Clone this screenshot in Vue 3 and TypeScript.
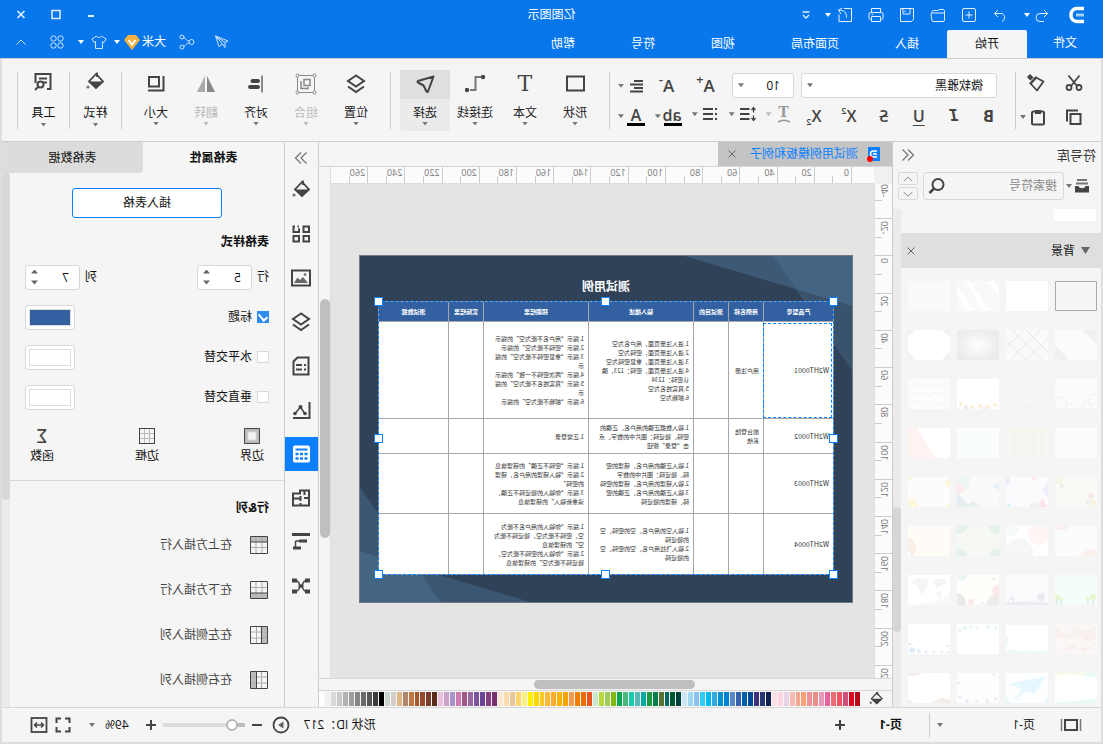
<script setup lang="ts">
import { ref } from 'vue'

interface Tool { label: string; icon: string; off?: boolean; on?: boolean; glyph?: string }
interface Row { code: string; name: string; input: string; expect: string }

const icons: Record<string, string> = {
  undo: '<path d="M8 5 4.500 8.500 8 12M4.500 8.500H12a4 4 0 0 1 0 8H8"/>',
  redo: '<path d="M12 5l3.500 3.500L12 12M15.500 8.500H9c-4 0-5 6-1 8"/>',
  plus: '<rect x="3.500" y="3.500" width="13" height="13" rx="1.500"/><path d="M10 6.500v7M6.500 10h7"/>',
  folder: '<path d="M3.500 7.500v7.500a1.500 1.500 0 0 0 1.500 1.500h10a1 1 0 0 0 1-1l1-6.500a1 1 0 0 0-1-1H4.500a1 1 0 0 1-1-1V5.500a2 2 0 0 1 1-1h4l2 1h4a1.500 1.500 0 0 1 1.500 2"/>',
  save: '<path d="M3.500 3.500h13v13h-11l-2-2zM7 4v5h7V4M12 5.500v1.500"/>',
  print: '<path d="M5.500 7.500v-4h9v4M5.500 14.500h-1a1.500 1.500 0 0 1-1.500-1.500V9a1.500 1.500 0 0 1 1.500-1.500h11A1.500 1.500 0 0 1 17 9v4a1.500 1.500 0 0 1-1.500 1.500h-1M5.500 11.500h9v5h-9zM13 9.500h1.500"/>',
  export: '<path d="M11 3.500H3.500v13h12.500v-7M8.500 12.500c0-5 2-7 7.500-7.500M12.500 3l4 2-2.500 4"/>',
  more: '<path d="M6.500 7h7M7 10l3 3 3-3" stroke-width="1.300"/>',
  min: '<path d="M7 11h6" stroke-width="2"/>',
  max: '<rect x="6" y="5.500" width="8" height="8" stroke-width="1.500"/>',
  close: '<path d="M6.500 6l7 7M13.500 6l-7 7" stroke-width="1.600"/>',
  cross: '<path d="M6.500 6.500l7 7M13.500 6.500l-7 7"/>',
  send: '<path d="M16.500 4 4 9l3 1.500v5l2.500-3.500 3.500 2.500zM7 10.500 16.500 4 9.500 12"/>',
  share: '<circle cx="5.500" cy="10" r="2.500"/><circle cx="15" cy="5" r="2"/><circle cx="15" cy="15" r="2"/><path d="M8 9c3 0 3-3 5.500-3.500M8 11c3 0 3 3 5.500 3.500"/>',
  shirt: '<path d="M7.500 4 3 7l2 3.500 1.500-1v7h7v-7l1.500 1L17 7l-4.500-3c-1 2-4 2-5 0z"/>',
  apps: '<circle cx="6.500" cy="6.500" r="2.700"/><circle cx="13.500" cy="6.500" r="2.700"/><circle cx="6.500" cy="13.500" r="2.700"/><circle cx="13.500" cy="13.500" r="2.700"/>',
  up: '<path d="M5.500 12.500 10 8l4.500 4.500"/>',
  down: '<path d="M5.500 8 10 12.500 14.500 8"/>',
  cut: '<path d="M4.500 2.500 13 13M15.500 2.500 7 13" stroke-width="1.800"/><circle cx="5" cy="14.500" r="2.500" stroke-width="1.800"/><circle cx="15" cy="14.500" r="2.500" stroke-width="1.800"/>',
  copy: '<path d="M3.500 7h10v10h-10z" stroke-width="2"/><path d="M6 3.500h11v11" stroke-width="2"/>',
  painter: '<path d="M17.500 2.500 14 6" stroke-width="4.500"/><path d="M10 4.500 2.500 8.500 9 17.500l6.500-7z" stroke-width="1.800" stroke-linejoin="round"/><path d="m9.500 4 6.500 7" stroke-width="2.500"/>',
  paste: '<rect x="4" y="4.500" width="12" height="13" rx="1.500" stroke-width="2"/><path d="M7 3h6v4H7z" fill="#444" stroke="none"/>',
  align: '<path d="M3 5h9M3 8.500h13M3 12h9M3 15.500h13" stroke-width="2"/>',
  spacing: '<path d="M7.500 5H17M7.500 10H17M7.500 15H17" stroke-width="2"/><path d="M3.500 4v4.500M3.500 11.500V16M1.500 6l2-2.500 2 2.500M1.500 14l2 2.500 2-2.500" stroke-width="1.300"/>',
  bullets: '<path d="M3 5h2M3 10h2M3 15h2M7 5h10M7 10h10M7 15h10" stroke-width="2"/>',
  arc: '<path d="M2 4q6-3.500 12 0" stroke-width="1.500"/>',
  rect: '<rect x="3" y="4.500" width="17" height="14" stroke-width="2"/>',
  connector: '<path d="M5 5h6.500v13H17" stroke="#777" stroke-width="2"/><circle cx="4" cy="5" r="2.200" fill="#444" stroke="none"/><circle cx="20" cy="18" r="2.200" fill="#444" stroke="none"/>',
  pick: '<path d="M3.500 4.500 19 9q1 .500 0 1.500l-5.500 3-3 6q-1 1-1.500 0z" stroke-width="2" stroke-linejoin="round"/>',
  layers: '<path d="m12 3.500 8 5.500-8 5.500L4 9zM4 14.500l8 5.500 8-5.500" stroke-width="2"/>',
  group: '<path d="M3.500 3.500h17v17h-17z"/><circle cx="3.500" cy="3.500" r="1.500" fill="#f5f5f5"/><circle cx="20.500" cy="3.500" r="1.500" fill="#f5f5f5"/><circle cx="3.500" cy="20.500" r="1.500" fill="#f5f5f5"/><circle cx="20.500" cy="20.500" r="1.500" fill="#f5f5f5"/><path d="M8 7.500h6v6H8zM16 10h1v6.500h-7V15" stroke-width="1.500"/>',
  alignL: '<path d="M6 3.500v17" stroke="#888" stroke-width="2"/><path d="M10 9h5.500M10 15h8" stroke-width="4" stroke-linecap="round"/>',
  flip: '<path d="M11 4v16H3z" fill="#888" stroke="none"/><path d="M13 4v16h8z" fill="#aaa" stroke="none"/>',
  size: '<path d="M9 5h10v9.500H9z" stroke-width="2"/><path d="M4.500 4v14.500H20" stroke-width="2"/>',
  bucket: '<path d="m11 4 7 7.500-7 6.500-7-6.500z" stroke-width="1.800"/><path d="M4 11.500h14l-7 7z" fill="#444" stroke="none"/><path d="M10 7V2.500" stroke-width="1.800"/><circle cx="19" cy="17" r="1.600" fill="#777" stroke="none"/>',
  tools: '<path d="M8 19H4.500V4h15v9M8 8.500h8M8 12.500h4" stroke-width="2"/><circle cx="14.500" cy="14.500" r="3" stroke-width="2"/><path d="m17 17 3 3" stroke-width="2"/>',
  modules: '<path d="M4 4.500h5.500v5.500H4zM4 14h5.500v5.500H4zM14 14h5.500v5.500H14zM14 6.500v3.500h5.500V4.500H18M14 4.500h1.500" stroke-width="2"/>',
  image: '<rect x="3" y="4.500" width="18" height="15" stroke-width="2"/><path d="m5 17 5-6 3 3 2.500-2.500L19 17z" fill="#666" stroke="none"/><circle cx="8" cy="8.500" r="1.300" fill="#666" stroke="none"/>',
  note: '<path d="M4.500 3.500h11l4 4v13h-15z" stroke-width="2"/><path d="M7 11h2M11 11h6M7 15.500h2M11 15.500h6" stroke-width="2"/>',
  chart: '<path d="M3.500 4v16H20" stroke-width="2"/><path d="m8 16 4.500-7 5.500 6.500" stroke-width="1.500"/><circle cx="8" cy="15.500" r="1.800" fill="#444" stroke="none"/><circle cx="12.500" cy="9" r="2" fill="#444" stroke="none"/><circle cx="18" cy="15.500" r="1.800" fill="#444" stroke="none"/>',
  sheet: '<rect x="3" y="3.500" width="17" height="17" rx="2" fill="#fff" stroke="none"/><path d="M5.500 7.500h12" stroke="#0a80ff" stroke-width="2"/><path d="M5.500 12h3M10 12h3M14.500 12h3M5.500 16.500h3M10 16.500h3M14.500 16.500h3" stroke="#0a80ff" stroke-width="2.500"/>',
  plan: '<path d="M4 4.500h9v3h7v12H4zM4 12h5M12.500 10v5M12.500 12.500H20M8.500 5v4M12.500 19.500V17" stroke-width="2"/>',
  gantt: '<path d="M3 4.500h18" stroke-width="3"/><path d="M6 11h8M12 18h8" stroke-width="3"/><path d="M17.500 11v6M14 11h3.500" stroke-width="1.500"/>',
  mind: '<path d="M6 6.500c5 0 4 5.500 6 5.500s1-5.500 6-5.500M6 17.500c5 0 4-5.500 6-5.500s1 5.500 6 5.500" stroke-width="1.500"/><path d="M3 6.500h5M16 6.500h5M3 17.500h5M16 17.500h5" stroke-width="4"/><path d="M9.500 12h5" stroke-width="3"/>',
  collapse: '<path d="m10 4.500-5.500 5.500L10 15.500M15.500 4.500 10 10l5.500 5.500" stroke-width="1.300"/>',
  expand: '<path d="m4.500 4.500 5.500 5.500-5.500 5.500M10 4.500l5.500 5.500-5.500 5.500" stroke-width="1.300"/>',
  library: '<path d="M5 4h10" stroke="#777" stroke-width="2"/><path d="M4 7.500h12" stroke="#777" stroke-width="2"/><path d="M3 10h3.500c.500 3 6.500 3 7 0H17v6.500H3z" fill="#444" stroke="none"/>',
  search: '<circle cx="9" cy="8.500" r="5.500" stroke-width="2"/><path d="m13 12.500 4.500 4.500" stroke-width="2.500"/>',
  margin: '<rect x="2.500" y="2.500" width="15" height="15" fill="#bbb"/><rect x="6" y="6" width="8" height="8" fill="#f5f5f5" stroke="#ddd"/>',
  border: '<path d="M7.500 3v14M12.500 3v14M3 7.500h14M3 12.500h14" stroke="#bbb"/><rect x="2.500" y="2.500" width="15" height="15"/>',
  book: '<rect x="6" y="5" width="12" height="10" stroke-width="2"/><path d="M2.500 4v12M21.500 4v12" stroke="#777" stroke-width="1.500"/>',
  play: '<circle cx="10" cy="10" r="7.500" stroke-width="1.800"/><path d="M7.500 6.500v7l5.500-3.500z" fill="#666" stroke="none"/>',
  minus: '<path d="M5 10h10" stroke-width="2"/>',
  add: '<path d="M5 10h10M10 5v10" stroke-width="2"/>',
  full: '<path d="M3.500 8V3.500H8M12 3.500h4.500V8M16.500 12v4.500H12M8 16.500H3.500V12" stroke-width="2"/>',
  fit: '<rect x="2.500" y="3" width="15" height="14" stroke-width="1.800"/><path d="M5.500 10h9M8 7.500 5.500 10 8 12.500M12 7.500l2.500 2.500-2.500 2.500" stroke-width="1.500"/>',
  rowTop: '<path d="M2 2h16v5H2z" fill="#bbb" stroke="none"/><path d="M7 2v16M13 2v16M2 12.500h16" stroke="#aaa"/><path d="M1.500 1.500h17v17h-17zM2 7h16"/>',
  rowBottom: '<path d="M2 13h16v5H2z" fill="#bbb" stroke="none"/><path d="M7 2v16M13 2v16M2 7.500h16" stroke="#aaa"/><path d="M1.500 1.500h17v17h-17zM2 13h16"/>',
  colLeft: '<path d="M2 2h5v16H2z" fill="#bbb" stroke="none"/><path d="M2 7h16M2 13h16M12.500 2v16" stroke="#aaa"/><path d="M1.500 1.500h17v17h-17zM7.500 2v16"/>',
  colRight: '<path d="M13 2h5v16h-5z" fill="#bbb" stroke="none"/><path d="M2 7h16M2 13h16M7.500 2v16" stroke="#aaa"/><path d="M1.500 1.500h17v17h-17zM12.500 2v16"/>',
}

const quick = ['redo', 'plus', 'folder', 'save', 'print', 'export']
const menus = ['插入', '页面布局', '视图', '符号', '帮助']

const drawTools: Tool[] = [
  { label: '形状', icon: 'rect' },
  { label: '文本', icon: '', glyph: 'T' },
  { label: '连接线', icon: 'connector' },
  { label: '选择', icon: 'pick', on: true },
]
const arrangeTools: Tool[] = [
  { label: '位置', icon: 'layers' },
  { label: '组合', icon: 'group', off: true },
  { label: '对齐', icon: 'alignL' },
  { label: '翻转', icon: 'flip', off: true },
  { label: '大小', icon: 'size' },
]

const side = ['bucket', 'modules', 'image', 'layers', 'note', 'chart', 'sheet', 'plan', 'gantt', 'mind']

const hMarks = Array.from({ length: 14 }, (_, i) => i * 20)
const vMarks = Array.from({ length: 14 }, (_, i) => (i - 2) * 20)

const heads = ['产品型号', '用例名称', '测试目的', '输入描述', '预期结果', '实际结果', '测试数据']
const rows: Row[] = [
  {
    code: 'W2HT0001', name: '用户注册',
    input: '1.进入注册页面，用户名为空\n2.进入注册页面，密码为空\n3.进入注册页面，重复密码为空\n4.进入注册页面，密码：123，确\n认密码：1234\n5.真实姓名为空\n6.邮箱为空',
    expect: '1.提示“用户名不能为空”的提示\n2.提示“密码不能为空”的提示\n3.提示“重复密码不能为空”的提\n示\n4.提示“两次密码不一致”的提示\n5.提示“真实姓名不能为空”的提\n示\n6.提示“邮箱不能为空”的提示',
  },
  {
    code: 'W2HT0002', name: '前台登陆\n系统',
    input: '1.输入数据正确的用户名、正确的\n密码、验证码：图片中的数字、点\n击“登录”按钮',
    expect: '1.正常登录',
  },
  {
    code: 'W2HT0003', name: '',
    input: '1.输入正确的用户名、错误的密\n码、验证码：图片中的数字\n2.输入错误的用户名、错误的密码\n3.输入正确的用户名、正确的密\n码、错误的验证码',
    expect: '1.提示“密码不正确”的错误信息\n2.提示“输入错误的用户名，错误\n的密码”\n3.提示“你输入的验证码不正确，\n请重新输入”的错误信息',
  },
  {
    code: 'W2HT0004', name: '',
    input: '1.输入空的用户名、空的密码、空\n的验证码\n2.输入飞拉用户名、空的密码、空\n的验证码',
    expect: '1.提示“你输入的用户名不能为\n空，密码不能为空，验证码不能为\n空”的错误信息\n2.提示“你输入的密码不能为空，\n验证码不能为空”的错误信息',
  },
]

const palette = (
  'b80818 dc0820 cc5078 f05464 ec6c74 e8609c e898b8 e89088 f09098 fca078 f0a890 f8bcb4 e8d4e8 fcd4e4 fce0e4 ' +
  '102050 283870 403080 004898 0060a8 3860b0 5888c8 0080d0 0090d0 30a8e0 00b8f0 30ccf8 8cc0f0 a0d8f0 cce8f8 ' +
  '004038 005830 006860 587030 008048 209840 00aca0 58b8b8 18ccb0 4cb880 00a850 80b810 a0cc60 b8d840 cce8cc ' +
  'e85420 ec6c00 f08000 f49c50 f4a400 f8b400 fcac28 fcb838 fcc828 fcd800 fff000 f8f080 fcd470 e8c898 fcdcac fce8d4 ' +
  '78306c 844080 6c4498 7c549c 9868a0 a05888 cc7cb0 a893cc c8a4c8 eac0dc ' +
  '5a2c1c 7c3c2c 964c2c a85828 c07840 b08870 deb887 d5cdc9 c9d4cd ' +
  '000000 3e3a39 575757 6a6c6a 868686 9d9f9d b0b3b0 c9cac9 d9d9d9 f0f0f0 ffffff'
).split(' ')

/* Thumbnail artwork, drawn on a 42 by 30 field. */
const bg = (c: string): string => `<path d="M0 0h42v30H0z" fill="${c}"/>`
const thumbs: string[] = [
  '<path d="M.500.500h41v29H.500z" fill="#f5f5f5" stroke="#aaa"/>',
  bg('#fff'),
  bg('#f9f9f9') + '<path d="M29 0h5L16 30h-6zM42 4v9L32 30h-6zM5 0h6L0 15V9z" fill="#fff"/>',
  bg('#fafafa'),
  bg('#fbfbfb') + '<path d="M0 0h15L0 14zM42 15v15H28z" fill="#f0f0f0"/>',
  bg('#fafafa') + '<path d="M0 8l22 22M8 0l30 30M24 0l18 18M0 22 22 0M6 30 36 0M22 30 42 11" stroke="#e6e6e6" fill="none"/>',
  '<defs><radialGradient id="glow"><stop offset="0" stop-color="#fff"/><stop offset="1" stop-color="#ececec"/></radialGradient></defs>' + bg('url(#glow)'),
  bg('#fff') + '<path d="M0 0h8L0 7zM42 0v7l-7-7zM0 30v-9l8 9zM42 30v-9l-8 9z" fill="#f2f2f2"/>',
  bg('#fbfbfb') + '<g fill="none" stroke="#f1f1f1"><circle cx="4" cy="20" r="5"/><circle cx="10" cy="27" r="4"/><circle cx="36" cy="24" r="6"/><circle cx="28" cy="29" r="4"/></g>',
  bg('#f4f4f4') + '<path d="M0 10q20-8 42 0M0 18q20 8 42-2M0 25q20-4 42 2" stroke="#f9f9f9" fill="none"/>',
  bg('#fff') + '<g fill="#fbf0d8"><circle cx="4" cy="26" r="2"/><circle cx="11" cy="28" r="2"/><circle cx="19" cy="27" r="2"/><circle cx="27" cy="28" r="2"/><circle cx="38" cy="25" r="2"/></g><g fill="#efe8e2"><circle cx="15" cy="29" r="1.500"/><circle cx="33" cy="28" r="2"/></g>',
  bg('#fcfcfc') + '<path d="M0 8l5-4 5 4 5-4 5 4 5-4 5 4 5-4 7 5M0 17l5-4 5 4 5-4 5 4 5-4 5 4 5-4 7 5M0 26l5-4 5 4 5-4 5 4 5-4 5 4 5-4 7 5" stroke="#f8f8f8" stroke-width="2" fill="none"/>',
  bg('#fbfdfc') + '<path d="M0 5h42M0 12h42M0 19h42M0 26h42" stroke="#f6faf8" stroke-dasharray="3 3"/>',
  bg('#f6f5f0') + '<path d="M6 0v30M14 0v30M24 0v30M34 0v30" stroke="#f3f2ec" stroke-width="2"/>',
  bg('#fbfefd') + '<path d="M0 8h42M0 16h42M0 24h42M8 0v30M17 0v30M27 0v30M36 0v30" stroke="#f6faf8"/>',
  bg('#fff') + '<path d="M33 0h9v30H15z" fill="#fef3f1"/>',
  bg('#f9f9f6') + '<circle cx="6" cy="19" r="3" fill="#f9eaea"/><circle cx="4" cy="26" r="3" fill="#f7f1de"/><circle cx="9" cy="25" r="2" fill="#eaedf4"/><circle cx="38" cy="4" r="3" fill="#f2f4e4"/><circle cx="35" cy="9" r="2" fill="#f3eaea"/>',
  bg('#fbfafc') + '<path d="M0 6l6 7-6 7zM42 0v10l-4-4V0z" fill="#f0eaf9"/><path d="M0 30h10l-4-9z" fill="#fce4ec"/><path d="M8 30l3-6 3 6z" fill="#e8f3ef"/><path d="M13 30l3-5 3 5z" fill="#f2e6f8"/><circle cx="14" cy="1" r="2" fill="#fce4ec"/><circle cx="39" cy="28" r="2" fill="#e0f3fb"/>',
  bg('#fafafb') + '<path d="M42 0v6l-10 8-4-14z" fill="#eef6f3"/><path d="M42 5v14l-9-7z" fill="#fbebe8"/><path d="M42 16v14H28z" fill="#e7eef1"/><path d="M34 30H18l8-6z" fill="#e5efec"/><path d="M0 4l7 5-7 5z" fill="#e6f2fb"/>',
  bg('#fcfcfc') + '<g fill="#fcf6da"><circle cx="1" cy="6" r="4"/><circle cx="38" cy="25" r="4"/><circle cx="40" cy="2" r="2"/><circle cx="2" cy="29" r="2"/><circle cx="34" cy="29" r="2"/></g>',
  bg('#fcfcfc') + '<path d="M42 0v2q-6 4-12 1l-4-3z" transform="translate(0 0)" fill="#faf1ee"/><path d="M0 30v-5q8-4 12 0t9 5z" fill="#faf1ee"/>',
  bg('#fff') + '<circle cx="9" cy="8" r="11" fill="#fdf6f4"/><circle cx="29" cy="27" r="14" fill="#f5f6f8"/><circle cx="37" cy="2" r="8" fill="#f4fbf9"/>',
  bg('#f6f8f3') + '<path d="M0 0h10q-2 7-10 7zM42 0H32q2 7 10 7zM0 30h10q-2-7-10-7zM42 30H32q2-7 10-7z" fill="#e6f3eb" stroke="#deeee4"/>',
  bg('#fffcf8') + '<path d="M40 12q-9 9-3 16 8-4 5-16M38 30V15" fill="#fcf2ea" stroke="#f8e9df"/>',
  bg('#f3fdf9') + '<g stroke="#dce9e3" stroke-width="1.500"><path d="M4 22v8M9 24v6M36 24v6M40 24v6"/></g><g fill="#e6f7cc"><circle cx="4" cy="22" r="3"/><circle cx="9" cy="24" r="2"/><circle cx="40" cy="22" r="2.500"/><circle cx="36" cy="24" r="2"/></g>',
  bg('#fbfbfd') + '<path d="M0 28q20-3 42 0v2H0zM6 22h1.500v7H6z" fill="#ebecf3"/><circle cx="7" cy="22" r="4" fill="#ebecf3"/><path d="M36 20l-2 8M34 24h5v4" stroke="#e6e7f0" fill="none"/>',
  bg('#fffefa') + '<circle cx="1" cy="16" r="6" fill="#fde9ec"/><circle cx="37" cy="1" r="5" fill="#e9f7f3"/><path d="M0 21q10-4 13 9H0z" fill="#edecea"/><circle cx="28" cy="27" r="3" fill="#fde6ea"/><path d="M42 18q-8 1-9 12h9z" fill="#e9e7e9"/><circle cx="5" cy="4" r="2" fill="#e9f7f0"/><circle cx="17" cy="28" r="2" fill="#ecf6f1"/>',
  bg('#fff') + '<path d="M4 4h9l4 3-4 7-4-4-6-2zM22 4l10-1 6 4-6 5-4 8-5-8zM10 16l4 2-3 6-3-4z" fill="#f4f5f5"/><path d="M0 18q10 10 34 11v1H0z" fill="#f8f8f8"/>',
  bg('#fbf7f6') + '<path d="M0 0l12 6 8-6 10 10 12-8v12L28 16l-10-4-8 8-10-6zM0 22l14 8 8-12 20 10" fill="#f8f1ef" stroke="#fefcfb"/>',
  bg('#fff') + '<path d="M42 10q-3 2-3 8 3 3 3 12zM42 27q-8-3-13 1-8-3-14 0-6-3-15-1v3h42z" fill="#edf9f6"/><path d="M0 0h42v1H0z" fill="#f7f7f7"/>',
  bg('#fff') + '<g fill="#e8f9f0"><circle cx="3" cy="4" r="2"/><circle cx="11" cy="3" r="2"/><circle cx="22" cy="4" r="1.500"/><circle cx="34" cy="4" r="2.500"/><circle cx="39" cy="6" r="2"/><circle cx="28" cy="3" r="2"/></g>',
  bg('#fff') + '<g fill="#e3edfa"><circle cx="2" cy="28" r="1.500"/><circle cx="8" cy="28" r="1.500"/><circle cx="16" cy="28" r="1.500"/><circle cx="24" cy="28" r="1.500"/><circle cx="31" cy="27" r="2"/><circle cx="38" cy="26" r="3"/><circle cx="40" cy="20" r="1.500"/><circle cx="2" cy="22" r="1.500"/></g>',
  bg('#fff') + '<path d="M0 0h42v2Q20 1 0 5zM0 30h42v-1Q20 29 0 25z" fill="#e6fbf8"/><path d="M12 0h30v3Q30 1 12 2z" fill="#fdfce4"/>',
  bg('#fdfeff') + '<path d="M2 3l38 8-26 10zM20 7l14 20L8 8z" fill="#e6f7fd"/><path d="M42 24v6h-5zM0 24v6h5z" fill="#e8f9fd"/>',
  bg('#fdfefe') + '<g fill="#eeeef8"><circle cx="1" cy="4" r="1"/><circle cx="3" cy="26" r="2"/><circle cx="12" cy="28" r="2"/><circle cx="22" cy="28" r="1.500"/><circle cx="32" cy="28" r="2"/><circle cx="39" cy="24" r="2"/><circle cx="40" cy="10" r="1.500"/><circle cx="5" cy="2" r="1.500"/></g>',
  bg('#fff') + '<path d="M42 0v3q-8 1-14-3zM0 30v-3q8-4 14 0l6 3zM42 26v4h-6z" fill="#f4ece9"/>',
]

const fontName = ref('微软雅黑')
const fontSize = ref('10')
const rowCount = ref(5)
const colCount = ref(7)
const zoom = ref(10)
const inserts = [
  { icon: 'rowTop', label: '在上方插入行' },
  { icon: 'rowBottom', label: '在下方插入行' },
  { icon: 'colLeft', label: '在左侧插入列' },
  { icon: 'colRight', label: '在右侧插入列' },
]
const bands = ref([
  { id: 'title', label: '标题', on: true },
  { id: 'horizontal', label: '水平交替', on: false },
  { id: 'vertical', label: '垂直交替', on: false },
])
const handles = ['nw', 'n', 'ne', 'w', 'e', 'sw', 's', 'se']
</script>

<template>
  <div class="app">
    <header class="top">
      <div class="titlebar">
        <svg class="logo" viewBox="0 0 16 18"><path d="M16 2.500H9a6 6 0 0 0-6 6.500 6 6 0 0 0 6 6.500h7" transform="matrix(-1 0 0 1 16 0)" fill="none" stroke="#fff" stroke-width="3.500" /><path d="M0 9h8" stroke="#9fd0ff" stroke-width="3" /></svg>
        <button class="tb undo" aria-label="撤销"><svg class="ic" viewBox="0 0 20 20" v-html="icons.undo" /></button>
        <i class="caret light" />
        <button v-for="q in quick" :key="q" class="tb" :aria-label="q"><svg class="ic" viewBox="0 0 20 20" v-html="icons[q]" /></button>
        <i class="caret light" />
        <button class="tb last" aria-label="更多"><svg class="ic" viewBox="0 0 20 20" v-html="icons.more" /></button>
        <h1 class="title">亿图图示</h1>
        <div class="win">
          <button v-for="w in ['min', 'max', 'close']" :key="w" class="wb" :aria-label="w"><svg class="ic" viewBox="0 0 20 20" v-html="icons[w]" /></button>
        </div>
      </div>
      <nav class="menubar">
        <button class="file">文件</button>
        <button class="active">开始</button>
        <button v-for="m in menus" :key="m">{{ m }}</button>
        <div class="account">
          <button class="ab" aria-label="发送"><svg class="ic" viewBox="0 0 20 20" v-html="icons.send" /></button>
          <button class="ab" aria-label="分享"><svg class="ic" viewBox="0 0 20 20" v-html="icons.share" /></button>
          <span class="user">大米</span>
          <svg class="gem" viewBox="0 0 16 15"><path d="M4 0h8l4 5-8 10L0 5z" fill="#f5b041" /><path d="m4.500 5 3.500 4.500L11.500 5" fill="none" stroke="#fff" stroke-width="2" /></svg>
          <i class="caret light" />
          <button class="ab shirt" aria-label="主题"><svg class="ic" viewBox="0 0 20 20" v-html="icons.shirt" /></button>
          <i class="caret light" />
          <button class="ab apps" aria-label="应用"><svg class="ic" viewBox="0 0 20 20" v-html="icons.apps" /></button>
          <button class="ab fold" aria-label="收起"><svg class="ic" viewBox="0 0 20 20" v-html="icons.up" /></button>
        </div>
      </nav>
    </header>

    <div class="frame">
      <section class="ribbon">
        <div class="grp clip">
          <button aria-label="剪切"><svg class="ic" viewBox="0 0 20 20" v-html="icons.cut" /></button>
          <button aria-label="格式刷"><svg class="ic" viewBox="0 0 20 20" v-html="icons.painter" /></button>
          <button aria-label="复制"><svg class="ic" viewBox="0 0 20 20" v-html="icons.copy" /></button>
          <button class="combo" aria-label="粘贴"><svg class="ic" viewBox="0 0 20 20" v-html="icons.paste" /><i class="caret" /></button>
        </div>
        <div class="grp fonts">
          <div class="line first">
            <label class="sel wide"><select v-model="fontName" aria-label="字体"><option>微软雅黑</option></select><i class="caret" /></label>
            <label class="sel"><select v-model="fontSize" aria-label="字号"><option>10</option></select><i class="caret" /></label>
            <button class="fmt grow">A<sup>+</sup></button>
            <button class="fmt grow">A<sup>-</sup></button>
            <button class="combo" aria-label="对齐方式"><svg class="ic" viewBox="0 0 20 20" v-html="icons.align" /><i class="caret" /></button>
          </div>
          <div class="line">
            <button class="fmt bold">B</button>
            <button class="fmt italic">I</button>
            <button class="fmt under">U</button>
            <button class="fmt strike">S</button>
            <button class="fmt">X<sup>2</sup></button>
            <button class="fmt">X<sub>2</sub></button>
            <button class="combo pale art"><span>T<svg viewBox="0 0 16 5" v-html="icons.arc" /></span><i class="caret" /></button>
            <button class="combo" aria-label="行距"><svg class="ic" viewBox="0 0 20 20" v-html="icons.spacing" /><i class="caret" /></button>
            <button class="combo" aria-label="项目符号"><svg class="ic" viewBox="0 0 20 20" v-html="icons.bullets" /><i class="caret" /></button>
            <button class="combo ink"><span>ab</span><i class="caret" /></button>
            <button class="combo ink"><span>A</span><i class="caret" /></button>
          </div>
        </div>
        <div class="grp">
          <button v-for="t in drawTools" :key="t.label" class="big" :class="{ on: t.on }">
            <span class="pic"><b v-if="t.glyph">{{ t.glyph }}</b><svg v-else class="ic24" viewBox="0 0 24 24" v-html="icons[t.icon]" /></span>
            <span class="cap">{{ t.label }}</span><i class="caret" />
          </button>
        </div>
        <div class="grp">
          <button v-for="t in arrangeTools" :key="t.label" class="big" :class="{ off: t.off }">
            <span class="pic"><svg class="ic24" viewBox="0 0 24 24" v-html="icons[t.icon]" /></span>
            <span class="cap">{{ t.label }}</span><i class="caret" />
          </button>
        </div>
        <div class="grp slim">
          <button class="big"><span class="pic"><svg class="ic24" viewBox="0 0 24 24" v-html="icons.bucket" /></span><span class="cap">样式</span><i class="caret" /></button>
        </div>
        <div class="grp slim">
          <button class="big"><span class="pic"><svg class="ic24" viewBox="0 0 24 24" v-html="icons.tools" /></span><span class="cap">工具</span><i class="caret" /></button>
        </div>
      </section>

      <div class="body">
        <aside class="library">
          <div class="lib-head"><h2>符号库</h2><button aria-label="收起符号库"><svg class="ic" viewBox="0 0 20 20" v-html="icons.collapse" /></button></div>
          <div class="lib-search">
            <button class="lib-menu" aria-label="符号库菜单"><svg class="ic" viewBox="0 0 20 20" v-html="icons.library" /><i class="caret" /></button>
            <label class="search"><input type="text" placeholder="搜索符号" aria-label="搜索符号"><svg class="ic" viewBox="0 0 20 20" v-html="icons.search" /></label>
            <div class="steps">
              <button aria-label="上一个"><svg class="ic" viewBox="0 0 20 20" v-html="icons.up" /></button>
              <button aria-label="下一个"><svg class="ic" viewBox="0 0 20 20" v-html="icons.down" /></button>
            </div>
          </div>
          <div class="lib-scroll">
            <div class="lib-list">
              <div class="prev" />
              <div class="cat"><i class="caret large" /><span>背景</span><button aria-label="关闭"><svg class="ic" viewBox="0 0 20 20" v-html="icons.cross" /></button></div>
              <div class="thumbs"><svg v-for="(t, i) in thumbs" :key="i" viewBox="0 0 42 30" v-html="t" /></div>
            </div>
            <div class="track"><div class="bar" /></div>
          </div>
        </aside>

        <main class="work">
          <div class="tabs">
            <div class="doc">
              <svg class="docicon" viewBox="0 0 18 16"><path d="M4 1h12v14H4z" fill="#0a80ff" /><path d="M7 5h3.500a3 3 0 0 1 0 6H7M7 8h4" fill="none" stroke="#fff" stroke-width="1.500" /><circle cx="14" cy="13" r="3" fill="#f00" /></svg>
              <span>测试用例模板和例子</span>
              <button aria-label="关闭文档"><svg class="ic" viewBox="0 0 20 20" v-html="icons.cross" /></button>
            </div>
          </div>
          <div class="stage">
            <div class="corner" />
            <div class="hruler"><span v-for="n in hMarks" :key="n">{{ n }}</span></div>
            <div class="gutter"><div class="bar" /></div>
            <div class="vruler"><div><span v-for="n in vMarks" :key="n"><em>{{ n }}</em></span></div></div>
            <div class="canvas">
              <div class="page">
                <svg class="deco" viewBox="0 0 494 347" preserveAspectRatio="none">
                  <g fill="#5a8cb4"><path d="M0 0h168L0 50z" opacity=".32" /><path d="M0 0h79L0 115z" opacity=".24" /><path d="M494 232v115h-81z" opacity=".28" /><path d="M494 296v51H323z" opacity=".28" /></g>
                </svg>
                <h3>测试用例</h3>
                <div class="tablebox">
                  <table>
                    <colgroup><col v-for="(h, i) in heads" :key="h" :class="'c' + i"></colgroup>
                    <thead><tr><th v-for="h in heads" :key="h">{{ h }}</th></tr></thead>
                    <tbody>
                      <tr v-for="(r, i) in rows" :key="r.code" :class="'r' + i">
                        <td class="code">{{ r.code }}</td><td>{{ r.name }}</td><td /><td>{{ r.input }}</td><td>{{ r.expect }}</td><td /><td />
                      </tr>
                    </tbody>
                  </table>
                  <div class="cellmark" />
                  <i v-for="h in handles" :key="h" class="handle" :class="h" />
                </div>
              </div>
            </div>
          </div>
          <div class="hscroll"><div class="bar" /></div>
          <div class="colors">
            <button aria-label="填充"><svg class="ic" viewBox="0 0 24 24" v-html="icons.bucket" /></button>
            <div class="swatches"><i v-for="(c, i) in palette" :key="i" :style="{ background: '#' + c }" /></div>
          </div>
        </main>

        <nav class="strip">
          <button class="exp" aria-label="展开"><svg class="ic" viewBox="0 0 20 20" v-html="icons.expand" /></button>
          <button v-for="s in side" :key="s" :class="{ on: s === 'sheet' }" :aria-label="s"><svg class="ic24" viewBox="0 0 24 24" v-html="icons[s]" /></button>
        </nav>

        <aside class="props">
          <div class="ptabs"><button class="cur">表格属性</button><button>表格数据</button></div>
          <div class="pscroll">
            <div class="pmain">
              <section>
                <button class="insert">插入表格</button>
                <h4>表格样式</h4>
                <div class="prow">
                  <label class="num">行<span><input v-model="rowCount" type="number"><i class="spin" /></span></label>
                  <label class="num">列<span><input v-model="colCount" type="number"><i class="spin" /></span></label>
                </div>
                <div v-for="b in bands" :key="b.id" class="prow">
                  <label class="check"><input v-model="b.on" type="checkbox">{{ b.label }}</label>
                  <button class="swatch" :class="{ blue: b.id === 'title' }" :aria-label="b.label + '颜色'"><i /></button>
                </div>
                <div class="trio">
                  <button><svg class="ic" viewBox="0 0 20 20" v-html="icons.margin" />边界</button>
                  <button><svg class="ic" viewBox="0 0 20 20" v-html="icons.border" />边框</button>
                  <button><b>Σ</b>函数</button>
                </div>
              </section>
              <section class="second">
                <h4>行&amp;列</h4>
                <button v-for="n in inserts" :key="n.icon" class="ins"><svg class="ic" viewBox="0 0 20 20" v-html="icons[n.icon]" />{{ n.label }}</button>
              </section>
            </div>
            <div class="track"><div class="bar" /></div>
          </div>
        </aside>
      </div>

      <footer class="status">
        <button class="book" aria-label="页面视图"><svg viewBox="0 0 24 20" v-html="icons.book" /></button>
        <button class="pagesel">页-1<i class="caret" /></button>
        <button class="pagetab">页-1</button>
        <button aria-label="添加页"><svg class="ic" viewBox="0 0 20 20" v-html="icons.add" /></button>
        <span class="shape">形状 ID：217</span>
        <button class="pl" aria-label="播放"><svg class="ic" viewBox="0 0 20 20" v-html="icons.play" /></button>
        <button aria-label="缩小"><svg class="ic" viewBox="0 0 20 20" v-html="icons.minus" /></button>
        <input v-model="zoom" class="range" type="range" min="0" max="100" aria-label="缩放">
        <button aria-label="放大"><svg class="ic" viewBox="0 0 20 20" v-html="icons.add" /></button>
        <span class="pct">49%</span><i class="caret" />
        <button class="fs" aria-label="全屏"><svg class="ic" viewBox="0 0 20 20" v-html="icons.full" /></button>
        <button aria-label="适应宽度"><svg class="ic" viewBox="0 0 20 20" v-html="icons.fit" /></button>
      </footer>
    </div>
  </div>
</template>

<style>
body { margin: 0; overflow: hidden; }
</style>

<style scoped>
* { box-sizing: border-box; }
.app {
  height: 100vh;
  min-height: 600px;
  display: flex;
  flex-direction: column;
  transform: scaleX(-1);
  font: 12px/16px "Open Sans", "Noto Sans CJK SC", sans-serif;
  color: #111;
  background: #f5f5f5;
}
button { border: 0; background: none; padding: 0; margin: 0; font: inherit; color: inherit; display: flex; align-items: center; justify-content: center; }
h1, h2, h3, h4 { margin: 0; font-size: 12px; }
.ic, .ic24 { width: 20px; height: 20px; fill: none; stroke: currentColor; flex: none; display: block; }
.ic24 { width: 24px; height: 24px; }
.caret { flex: none; width: 6px; height: 4px; background: #777; clip-path: polygon(0 0, 100% 0, 50% 100%); }
.caret.light { background: #fff; }
.caret.large { width: 9px; height: 7px; }

.top { background: #0877ec; color: #e3f0ff; }
.titlebar { height: 30px; display: flex; align-items: center; position: relative; padding-left: 19px; }
.logo { width: 16px; height: 18px; margin-right: 15px; }
.tb { width: 31px; height: 28px; }
.tb.undo { width: 22px; }
.titlebar .caret + .tb { margin-left: 8px; }
.titlebar .tb + .caret { margin-left: -1px; }
.titlebar .undo + .caret { margin-left: 1px; }
.titlebar .caret + .tb.last { margin-left: 3px; }
.title { position: absolute; left: 0; right: 0; text-align: center; font-weight: 400; color: #fff; pointer-events: none; }
.win { margin-left: auto; display: flex; padding-right: 4px; }
.wb { width: 35px; height: 28px; }
.menubar { height: 28px; display: flex; color: #fff; }
.menubar > button { padding: 0 28px; }
.menubar > .file { width: 76px; padding: 0 0 2px; }
.menubar > .active { background: #f5f5f5; color: #111; border-radius: 2px 2px 0 0; }
.account { margin-left: auto; display: flex; align-items: center; color: #cfe5ff; padding-bottom: 4px; }
.ab { width: 35px; height: 24px; }
.user { color: #fff; margin-left: 3px; }
.gem { width: 16px; height: 15px; margin: 0 4px 0 2px; }
.ab.shirt { width: 30px; }
.ab.apps { width: 42px; }
.ab.fold { width: 30px; margin-right: 6px; }

.frame { flex: 1; min-height: 0; display: flex; flex-direction: column; border: 2px solid #dedede; border-top: 1px solid #ccc; }
.ribbon { height: 83px; display: flex; align-items: center; border-bottom: 1px solid #ccc; color: #444; flex: none; }
.grp { height: 57px; display: flex; align-items: center; padding: 0 9px; border-right: 1px solid #ccc; }
.clip { width: 86px; display: grid; grid-template: 34px 34px / 38px 38px; align-content: center; padding: 0 0 0 8px; }
.combo { width: 37px; display: flex; justify-content: flex-start; gap: 1px; }
.combo > span { width: 22px; text-align: center; }
.combo > .ic { margin: 0 1px; }
.clip .combo { padding-left: 6px; }
.fonts { flex-direction: column; justify-content: center; align-items: flex-start; width: 406px; padding: 0 0 0 9px; }
.line { display: flex; height: 34px; align-items: center; width: 100%; }
.line.first { padding-left: 9px; }
.sel { position: relative; width: 62px; margin-right: 7px; }
.sel.wide { width: 196px; }
.sel select { appearance: none; width: 100%; height: 25px; border: 1px solid #d8d8d8; border-radius: 3px; background: #fff; padding: 0 0 0 13px; font: inherit; color: #111; display: block; }
.sel .caret { position: absolute; right: 6px; top: 10px; }
.fmt { width: 35px; height: 26px; font-size: 16px; line-height: 20px; font-family: "Open Sans", sans-serif; color: #444; font-weight: 600; padding-top: 4px; }
.fmt.grow { width: 39px; font-size: 17px; padding-top: 0; }
.fmt sup, .fmt sub { font-size: 9px; line-height: 9px; align-self: flex-start; padding-top: 1px; }
.fmt.grow sup { font-size: 13px; padding-top: 2px; }
.fmt sub { align-self: flex-end; padding-bottom: 1px; }
.fmt.bold { font-weight: 700; }
.fmt.italic { font-family: "DejaVu Sans Mono", monospace; font-style: italic; }
.fmt.under { text-decoration: underline; text-underline-offset: 3px; }
.fmt.strike { text-decoration: line-through; }
.line .art { margin-left: 2px; color: #999; }
.art span { font: 700 14px/12px "DejaVu Serif", serif; }
.art span svg { display: block; width: 16px; height: 5px; margin: 0 auto; fill: none; stroke: currentColor; }
.pale .caret { background: #bbb; }
.ink { padding-top: 4px; }
.ink span { font-size: 16px; line-height: 16px; font-weight: 600; border-bottom: 3px solid #000; width: 18px; margin: 0 2px; }
.big { width: 50px; height: 61px; flex-direction: column; justify-content: flex-start; color: #444; border-radius: 2px; }
.pic { height: 29px; width: 100%; display: flex; align-items: center; justify-content: center; }
.pic b { font: 22px/24px "DejaVu Serif", serif; }
.cap { height: 23px; line-height: 28px; color: #222; }
.big.on { background: #ebebeb; }
.big.on .pic { background: #dfdfdf; }
.big.off { color: #888; }
.big.off .cap { color: #bbb; }
.big.off .caret { background: #bbb; }
.slim { padding: 0; width: 52px; justify-content: center; }
.slim .pic { height: 25px; }
.slim .cap { height: 28px; line-height: 36px; color: #111; }

.body { flex: 1; min-height: 0; display: grid; grid-template-columns: 209px minmax(0, 1fr) 35px 282px; }
.library { border-right: 1px solid #ccc; display: flex; flex-direction: column; min-height: 0; overflow: hidden; }
.lib-head { display: flex; justify-content: space-between; align-items: center; height: 26px; padding: 0 5px; flex: none; }
.lib-head h2 { font-size: 13px; font-weight: 400; color: #333; }
.lib-head .ic { color: #777; }
.lib-search { display: flex; height: 41px; padding: 4px 5px 9px 9px; flex: none; }
.lib-menu { gap: 0; width: 29px; justify-content: flex-start; color: #444; }
.search { width: 141px; border: 1px solid #d8d8d8; border-radius: 3px; display: flex; align-items: center; }
.search input { flex: 1; min-width: 0; border: 0; background: none; font: inherit; padding: 0 0 0 6px; outline: 0; }
.search input::placeholder { color: #888; opacity: 1; }
.search .ic { margin-right: 3px; color: #444; }
.steps { display: flex; flex-direction: column; justify-content: space-between; margin-left: 5px; }
.steps button { width: 20px; height: 13px; border: 1px solid #d8d8d8; border-radius: 3px; overflow: hidden; color: #777; }
.steps .ic { width: 18px; height: 18px; }
.lib-scroll { flex: 1; min-height: 0; display: flex; }
.lib-list { flex: 1; overflow: hidden; }
.prev { width: 42px; height: 12px; background: #fff; margin: 0 0 12px 5px; }
.cat { height: 35px; background: #dfdfdf; display: flex; align-items: center; padding-left: 11px; gap: 6px; margin-bottom: 13px; }
.cat .caret { background: #666; }
.cat button { margin-left: auto; color: #666; }
.thumbs { display: grid; grid-template-columns: repeat(4, 42px); gap: 19px 7px; padding-left: 4px; }
.thumbs svg { width: 42px; height: 30px; display: block; }
.track { width: 8px; background: #ebebeb; flex: none; }
.lib-scroll .track { padding-top: 298px; }
.lib-scroll .bar { height: 125px; background: #d6d6d6; border-radius: 4px; }

.work { display: flex; flex-direction: column; min-width: 0; min-height: 0; }
.tabs { height: 25px; border-bottom: 1px solid #d8d8d8; flex: none; display: flex; }
.doc { width: 174px; background: #c4c4c4; color: #0a80ff; display: flex; align-items: center; padding-left: 8px; }
.docicon { width: 18px; height: 16px; margin-right: 8px; }
.doc button { margin-left: auto; margin-right: 4px; color: #666; }
.stage { flex: 1; min-height: 0; display: grid; grid-template: 17px minmax(0, 1fr) / 18px minmax(0, 1fr) 12px; }
.corner { background: #f0f0f0; }
.hruler, .vruler { background: #fbfbfb; color: #777; font-size: 9px; line-height: 11px; overflow: hidden; }
.hruler { display: flex; padding-left: 22px; border-bottom: 1px solid #ddd; }
.hruler span { flex: 1; border-left: 1px solid #ccc; padding-left: 2px; background: linear-gradient(#ccc, #ccc) 50% 100% / 1px 7px no-repeat; }
.vruler { border-right: 1px solid #ddd; }
.vruler > div { display: flex; flex-direction: column; height: calc(100% + 27px); margin-top: -3px; }
.vruler span { flex: 1; border-top: 1px solid #ccc; background: linear-gradient(#ccc, #ccc) 100% 50% / 7px 1px no-repeat; padding: 2px 0 0 2px; }
.vruler em { font-style: normal; writing-mode: vertical-rl; transform: rotate(180deg); display: block; width: 11px; }
.gutter { grid-row: 1 / 3; grid-column: 3; background: #f5f5f5; border-left: 1px solid #ddd; padding: 132px 1px 0 0; }
.gutter .bar { height: 239px; background: #bfbfbf; border-radius: 5px; }
.canvas { background: #e4e4e4; position: relative; overflow: hidden; }
.page { position: absolute; left: 21px; top: 71px; width: 494px; height: 348px; background: #304257; border: 1px solid #6f7a86; }
.deco { position: absolute; inset: 0; width: 100%; height: 100%; }
.page h3 { position: absolute; top: 23px; width: 100%; text-align: center; color: #fff; }
.tablebox { position: absolute; left: 18px; top: 45px; width: 456px; }
table { border-collapse: collapse; table-layout: fixed; width: 100%; background: #fff; font: 6px/9px "Noto Sans CJK SC", sans-serif; color: #333; }
.c0, .c6 { width: 70px; }
.c1, .c2, .c5 { width: 35px; }
.c3, .c4 { width: 105px; }
th, td { border: 1px solid #a5a5aa; padding: 0 4px; text-align: left; vertical-align: middle; white-space: pre; overflow: hidden; }
th { background: #3360a0; color: #fff; text-align: center; height: 20px; font-weight: 700; }
.code { font-size: 7px; }
.r0 td { height: 97px; }
.r1 td { height: 35px; }
.r2 td { height: 60px; }
.r3 td { height: 61px; }
.tablebox::after { content: ""; position: absolute; inset: 0; border: 1px dashed #0a80ff; }
.cellmark { position: absolute; left: 2px; top: 22px; width: 69px; height: 95px; border: 1px dashed #0a80ff; }
.handle { position: absolute; z-index: 1; width: 9px; height: 9px; background: #fff; border: 1px solid #0a80ff; }
.nw, .n, .ne { top: -4px; }
.w, .e { top: calc(50% - 4px); }
.sw, .s, .se { bottom: -4px; }
.nw, .w, .sw { left: -4px; }
.n, .s { left: calc(50% - 4px); }
.ne, .e, .se { right: -4px; }
.hscroll { height: 13px; border-top: 1px solid #d8d8d8; border-bottom: 1px solid #d8d8d8; padding-left: 197px; flex: none; }
.hscroll .bar { width: 161px; height: 9px; margin-top: 1px; background: #bfbfbf; border-radius: 5px; }
.colors { height: 16px; display: flex; padding: 1px 0; flex: none; }
.colors > button { width: 32px; color: #444; }
.colors .ic { width: 18px; height: 18px; }
.swatches { flex: 1; display: flex; gap: 1px; }
.swatches i { flex: 1; }

.strip { border: solid #ccc; border-width: 0 1px; display: flex; flex-direction: column; color: #444; }
.strip button { height: 34px; margin-bottom: 10px; flex: none; }
.strip .exp { height: 31px; margin: 0; color: #777; }
.strip .on { background: #0a80ff; }

.props { display: flex; flex-direction: column; min-height: 0; }
.ptabs { display: grid; grid-template-columns: 1fr 1fr; height: 31px; flex: none; }
.ptabs button + button { background: #dcdcdc; border-bottom-left-radius: 4px; }
.ptabs .cur { font-weight: 700; }
.pscroll { flex: 1; min-height: 0; display: flex; }
.pmain { flex: 1; overflow: hidden; }
.pmain section { padding: 15px 15px 0; }
.pscroll .bar { height: 327px; background: #d8d8d8; border-radius: 4px; }
.insert { width: 150px; height: 30px; margin: 0 auto; border: 1px solid #0a80ff; border-radius: 3px; background: #fff; }
.pmain h4 { margin: 16px 0 7px; }
.prow { height: 40px; display: flex; align-items: center; justify-content: space-between; }
.num { display: flex; align-items: center; gap: 5px; }
.num span { position: relative; }
.num input { appearance: textfield; width: 55px; height: 25px; border: 1px solid #d8d8d8; border-radius: 3px; background: #fff; font: inherit; padding: 0 0 0 10px; display: block; color: #111; }
.num input::-webkit-inner-spin-button { appearance: none; }
.spin { position: absolute; right: 6px; top: 5px; width: 7px; height: 15px; background: #666; clip-path: polygon(0 4px, 50% 0, 100% 4px, 0 4px, 0 11px, 100% 11px, 50% 100%, 0 11px); }
.check { display: flex; align-items: center; gap: 5px; }
.check input { appearance: none; width: 12px; height: 12px; margin: 0; background: #fff; border: 1px solid #d8d8d8; }
.check input:checked { border: 0; background: #2d8cf0; display: grid; place-items: center; }
.check input:checked::after { content: ""; width: 4px; height: 7px; border: solid #fff; border-width: 0 2px 2px 0; rotate: 40deg; margin-bottom: 2px; }
.swatch { width: 50px; height: 25px; border: 1px solid #d8d8d8; border-radius: 3px; background: #fff; }
.swatch i { width: 42px; height: 17px; border: 1px solid #ddd; }
.swatch.blue i { background: #3360a0; }
.trio { display: flex; justify-content: space-between; padding: 9px 5px 0; height: 63px; }
.trio button { flex-direction: column; justify-content: flex-start; color: #111; gap: 2px; }
.trio .ic { color: #444; stroke: #444; }
.trio b { font: 19px/20px "DejaVu Sans", sans-serif; color: #444; }
.pmain .second { border-top: 1px solid #d8d8d8; }
.second h4 { margin: 4px 0 6px; }
.ins { height: 45px; gap: 17px; color: #444; }

.status { height: 35px; border-top: 1px solid #d8d8d8; display: flex; align-items: center; padding: 0 25px 0 18px; flex: none; color: #444; }
.status > button { width: 24px; }
.book svg { width: 24px; height: 20px; fill: none; stroke: currentColor; }
.status > .pagesel { width: 106px; height: 25px; border-right: 1px solid #ccc; margin-left: 24px; padding-right: 7px; justify-content: space-between; color: #111; }
.status > .pagetab { font-weight: 700; color: #111; margin: 0 26px; width: 25px; white-space: nowrap; }
.shape { margin-left: auto; color: #111; margin-right: 11px; }
.range { appearance: none; width: 82px; height: 12px; margin: 0; background: linear-gradient(#bbb, #bbb) 0 50% / 12px 4px no-repeat, linear-gradient(#dcdcdc, #dcdcdc) 0 50% / 100% 4px no-repeat; }
.range::-webkit-slider-thumb { appearance: none; width: 12px; height: 12px; border-radius: 6px; border: 2px solid #b8b8b8; background: #fff; }
.pct { margin: 0 10px; color: #111; }
.status > .fs { margin-left: 14px; }
</style>
